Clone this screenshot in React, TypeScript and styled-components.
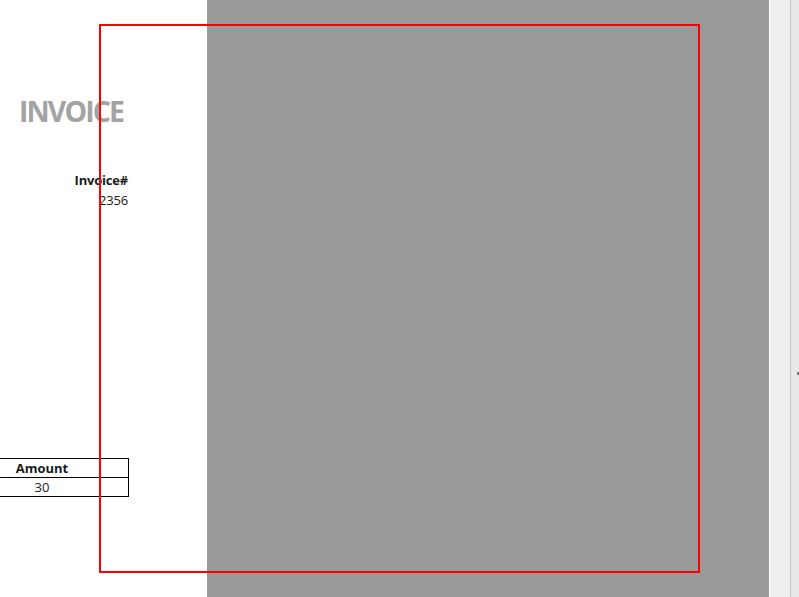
import React from "react";
import styled, { createGlobalStyle } from "styled-components";

const Global = createGlobalStyle`
  html, body { margin: 0; padding: 0; background: #ffffff; }
  body { font-family: "Open Sans", "Liberation Sans", sans-serif; overflow: hidden; }
  #root { width: 799px; height: 597px; }
`;

const Screen = styled.div`
  position: relative;
  display: flex;
  width: 799px;
  height: 597px;
  overflow: hidden;
`;

const Sheet = styled.div`
  width: 207px;
  flex: none;
  background: #ffffff;
  display: flex;
  flex-direction: column;
`;

const Title = styled.h1`
  margin: 93px 0 0 19px;
  font-size: 28.5px;
  line-height: 36px;
  font-weight: 700;
  color: #a3a3a3;
  letter-spacing: -1.9px;
`;

const MetaBlock = styled.div`
  width: 128px;
  margin-top: 41px;
  display: flex;
  flex-direction: column;
  align-items: flex-end;
`;

const MetaLabel = styled.div<{ $bold?: boolean }>`
  font-size: 13px;
  line-height: 20px;
  font-weight: ${(p) => (p.$bold ? 700 : 400)};
  color: #1a1a1a;
  letter-spacing: -0.2px;
`;

const ItemsTable = styled.table`
  margin-top: 248px;
  width: 129px;
  border-collapse: collapse;
`;

const Cell = styled.td<{ $bold?: boolean }>`
  border-top: 1px solid #000;
  border-bottom: 1px solid #000;
  border-right: 1px solid #000;
  height: 18px;
  padding: 0 44px 0 0;
  text-align: center;
  font-size: 13px;
  line-height: 18px;
  font-weight: ${(p) => (p.$bold ? 700 : 400)};
  color: #1a1a1a;
`;

const Backdrop = styled.div`
  width: 562px;
  flex: none;
  background: #999999;
`;

const Gap = styled.div`
  width: 1px;
  flex: none;
  background: #ffffff;
`;

const Strip = styled.div`
  width: 20px;
  flex: none;
  background: #efefef;
  border-right: 1px solid #c8c8c8;
`;

const Rail = styled.div`
  flex: 1;
  background: #e9e9e9;
  display: flex;
  flex-direction: column;
  align-items: flex-end;
  padding-top: 372px;
`;

const Notch = styled.div`
  width: 2px;
  height: 3px;
  background: #777777;
`;

const Selection = styled.div`
  position: absolute;
  left: 99px;
  top: 24px;
  width: 597px;
  height: 545px;
  border: 2px solid #ff0000;
  pointer-events: none;
`;

export default function App() {
  return (
    <>
      <Global />
      <Screen>
        <Sheet>
          <Title>INVOICE</Title>
          <MetaBlock>
            <MetaLabel $bold>Invoice#</MetaLabel>
            <MetaLabel>2356</MetaLabel>
          </MetaBlock>
          <ItemsTable>
            <tbody>
              <tr>
                <Cell $bold>Amount</Cell>
              </tr>
              <tr>
                <Cell>30</Cell>
              </tr>
            </tbody>
          </ItemsTable>
        </Sheet>
        <Backdrop />
        <Gap />
        <Strip />
        <Rail>
          <Notch />
        </Rail>
        <Selection />
      </Screen>
    </>
  );
}
